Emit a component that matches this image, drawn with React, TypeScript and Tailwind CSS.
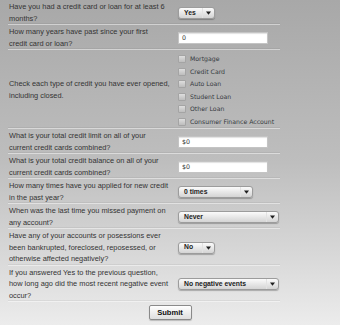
import React from "react";

const Arrow = () => (
  <svg width="5" height="4" viewBox="0 0 5 4" className="shrink-0">
    <path d="M0 0.5h5L2.5 3.8z" fill="#1f1f1f" />
  </svg>
);

const Select = ({ value, w }: { value: string; w: string }) => (
  <div
    className={`flex h-[12px] ${w} items-center justify-between rounded-[3px] border border-[#9c9c9c] bg-gradient-to-b from-[#fbfbfb] to-[#d4d4d4] pl-[5px] pr-[3px] shadow-[0_1px_1px_rgba(0,0,0,0.25)]`}
  >
    <span className="text-[6.8px] font-bold leading-none text-[#222]">{value}</span>
    <span className="flex h-full items-center border-l border-[#e2e2e2] pl-[3px]">
      <Arrow />
    </span>
  </div>
);

const Input = ({ value }: { value: string }) => (
  <div className="flex h-[12px] w-[90px] items-center border border-[#c4c4c4] bg-white pl-[3px] shadow-[inset_0_1px_1px_rgba(0,0,0,0.12)]">
    <span className="font-['DejaVu_Sans',sans-serif] text-[6.3px] leading-none text-[#333]">{value}</span>
  </div>
);

// label lines are given one by one so they break where the screenshot does
const Row = ({ lines, children }: { lines: string[]; children: React.ReactNode }) => (
  <div className="flex items-center border-b border-white/45 pt-[1px] shadow-[inset_0_-1px_0_rgba(0,0,0,0.05)]">
    <div className="w-[170px] whitespace-nowrap pl-[1px] text-[7.4px] leading-[11.5px] text-[#333]">
      {lines.map((l) => (
        <div key={l}>{l}</div>
      ))}
    </div>
    <div className="flex flex-1 items-center pt-[1px]">{children}</div>
  </div>
);

const creditTypes = ["Mortgage", "Credit Card", "Auto Loan", "Student Loan", "Other Loan", "Consumer Finance Account"];

export default function App() {
  return (
    <div className="h-[325px] w-full bg-gradient-to-b from-[#a8a8a8] via-[#bebebe] to-[#ececec] font-['Liberation_Sans',Arial,sans-serif]">
      <div className="ml-[8px] w-[272px]">
        <Row lines={["Have you had a credit card or loan for at least 6", "months?"]}>
          <Select value="Yes" w="w-[37px]" />
        </Row>
        <Row lines={["How many years have past since your first", "credit card or loan?"]}>
          <Input value="0" />
        </Row>
        <Row lines={["Check each type of credit you have ever opened,", "including closed."]}>
          <div className="flex flex-col pt-[1px]">
            {creditTypes.map((t) => (
              <div key={t} className="flex h-[12.5px] items-center gap-[4px]">
                <span className="h-[8px] w-[8px] rounded-[1px] border border-[#a4a4a4] bg-gradient-to-b from-[#dedede] to-[#bdbdbd]" />
                <span className="font-['DejaVu_Sans',sans-serif] text-[6.2px] leading-none text-[#353a3f]">{t}</span>
              </div>
            ))}
          </div>
        </Row>
        <Row lines={["What is your total credit limit on all of your", "current credit cards combined?"]}>
          <Input value="$0" />
        </Row>
        <Row lines={["What is your total credit balance on all of your", "current credit cards combined?"]}>
          <Input value="$0" />
        </Row>
        <Row lines={["How many times have you applied for new credit", "in the past year?"]}>
          <Select value="0 times" w="w-[75px]" />
        </Row>
        <Row lines={["When was the last time you missed payment on", "any account?"]}>
          <Select value="Never" w="w-[101px]" />
        </Row>
        <Row
          lines={[
            "Have any of your accounts or posessions ever",
            "been bankrupted, foreclosed, reposessed, or",
            "otherwise affected negatively?",
          ]}
        >
          <Select value="No" w="w-[37px]" />
        </Row>
        <Row
          lines={[
            "If you answered Yes to the previous question,",
            "how long ago did the most recent negative event",
            "occur?",
          ]}
        >
          <Select value="No negative events" w="w-[101px]" />
        </Row>
      </div>
      <div className="flex justify-center pt-[3px]">
        <button className="h-[15px] w-[43px] rounded-[2px] border border-[#8a8a8a] bg-gradient-to-b from-white to-[#dedede] text-[7.6px] font-bold leading-none text-[#111] shadow-[0_1px_1px_rgba(0,0,0,0.2)]">
          Submit
        </button>
      </div>
    </div>
  );
}
